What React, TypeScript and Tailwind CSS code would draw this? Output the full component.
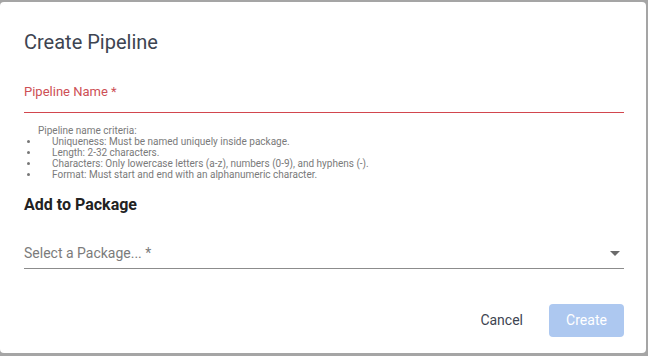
const CRITERIA = [
  'Uniqueness: Must be named uniquely inside package.',
  'Length: 2-32 characters.',
  'Characters: Only lowercase letters (a-z), numbers (0-9), and hyphens (-).',
  'Format: Must start and end with an alphanumeric character.',
];

export default function App() {
  return (
    <div
      className="w-[648px] h-[356px] bg-[#a5a5a5] pt-[2px] pr-[2px] pb-[3px] flex"
      style={{ fontFamily: 'Roboto, "Liberation Sans", sans-serif' }}
    >
      <div className="flex-1 bg-white rounded-[4px] flex flex-col pl-6 pr-[22px]">
        <h2 className="mt-[26px] text-[20px] leading-[28px] text-[#3d4451]">Create Pipeline</h2>

        {/* pipeline name field */}
        <div className="mt-[23px] border-b border-[#d2464e] pb-[9px]">
          <span className="text-[13px] leading-[18px] text-[#cd4f55]">Pipeline Name *</span>
        </div>

        <div className="mt-[12px] text-[10px] leading-[11px] text-[#7a7a7a]">
          <p className="pl-[14px]">Pipeline name criteria:</p>
          {CRITERIA.map((c) => (
            <div key={c} className="flex items-center">
              <span className="w-[28px] flex justify-start pl-[3px]">
                <span className="w-[3px] h-[3px] rounded-full bg-[#777]" />
              </span>
              <span>{c}</span>
            </div>
          ))}
        </div>

        <h3 className="mt-[15px] text-[16px] leading-[20px] font-bold text-[#222]">Add to Package</h3>

        {/* package select */}
        <div className="mt-[29px] border-b border-[#8c8c8c] pb-[6px] flex items-center justify-between">
          <span className="text-[14px] leading-[18px] text-[#7b7b7b]">Select a Package... *</span>
          <svg width="10" height="5" viewBox="0 0 10 5" className="mr-[4px]">
            <path d="M0 0h10L5 5z" fill="#6b6b6b" />
          </svg>
        </div>

        <div className="mt-auto mb-[16px] flex items-center justify-end gap-[26px]">
          <button className="text-[14px] text-[#3d4451]">Cancel</button>
          <button className="w-[75px] h-[33px] rounded-[4px] bg-[#adc8f0] text-[14px] text-white">
            Create
          </button>
        </div>
      </div>
    </div>
  );
}
